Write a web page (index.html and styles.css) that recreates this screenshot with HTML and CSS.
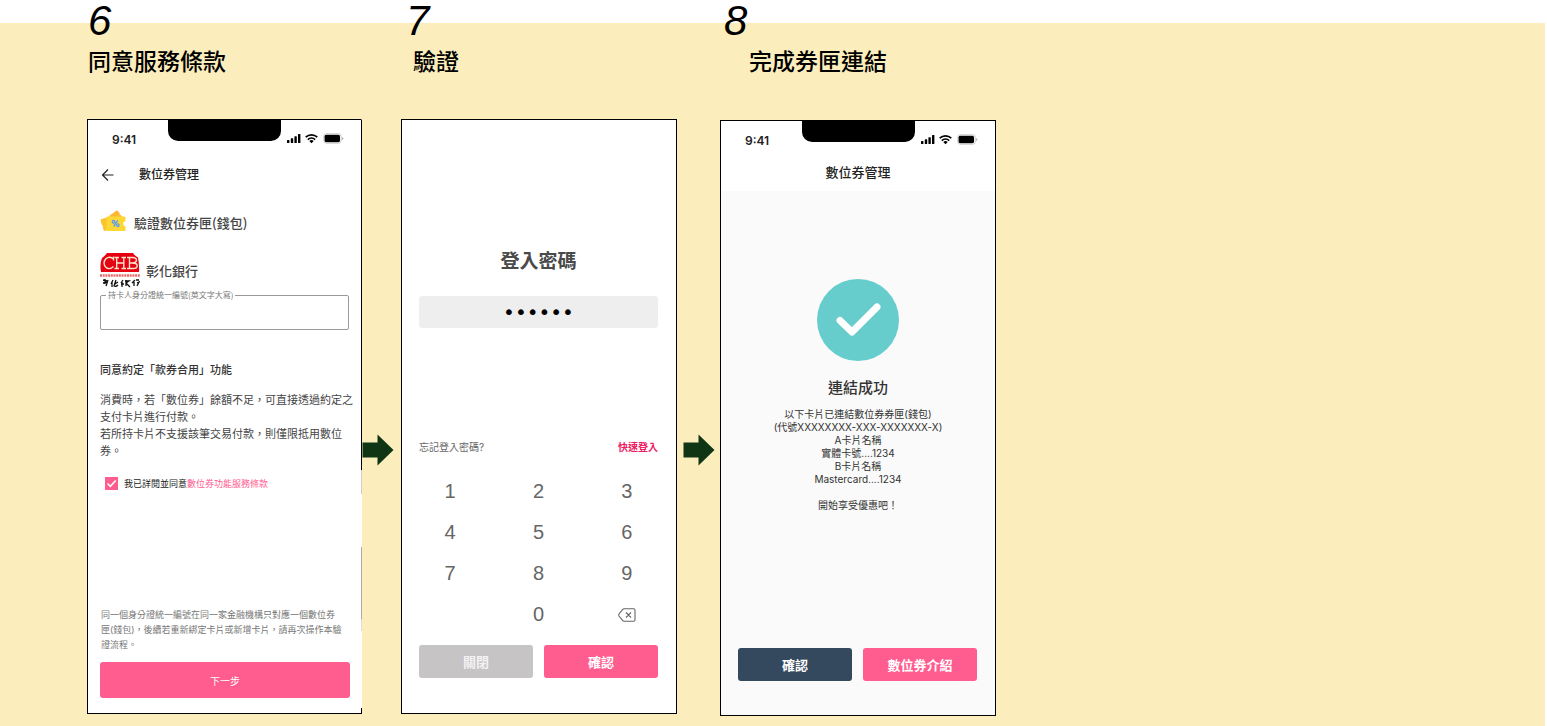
FILE: index.html
```html
<!DOCTYPE html>
<html lang="zh-Hant">
<head>
<meta charset="utf-8">
<meta name="viewport" content="width=device-width, initial-scale=1">
<title>數位券匣連結流程</title>
<link rel="stylesheet" href="styles.css">
</head>
<body>
<svg class="defs" aria-hidden="true">
  <symbol id="status" viewBox="0 0 58 12">
    <g fill="#000">
      <rect x="0" y="8" width="2.4" height="3" rx=".6"/>
      <rect x="3.8" y="6.3" width="2.4" height="4.7" rx=".6"/>
      <rect x="7.4" y="4.2" width="2.4" height="6.8" rx=".6"/>
      <rect x="11" y="2" width="2.4" height="9" rx=".6"/>
      <path d="M24.500 11.200 22.300 9a3.200 3.200 0 0 1 4.400 0z"/>
      <rect x="37.500" y="2.800" width="15.500" height="7.400" rx="1.600"/>
    </g>
    <g fill="none" stroke="#000" stroke-width="1.600">
      <path d="M18.700 5.200a8.500 8.500 0 0 1 11.600 0"/>
      <path d="M20.800 7.600a5.400 5.400 0 0 1 7.400 0"/>
    </g>
    <rect x="36.800" y="1.800" width="17.400" height="9.400" rx="2.600" fill="none" stroke="#bbb" stroke-width=".8"/>
    <path d="M55.200 5v3q1.200-.5 1.200-1.500T55.200 5z" fill="#aaa"/>
  </symbol>
  <symbol id="next" viewBox="0 0 32 32">
    <path d="M.500 8.500h15V.500L31.500 16l-16 15.500v-8h-15z" fill="#0f3515"/>
  </symbol>
</svg>

<main class="flow">
  <section class="step">
    <header class="step-head">
      <p class="step-number">6</p>
      <h2 class="step-title">同意服務條款</h2>
    </header>
    <form class="phone phone-terms">
      <div class="statusbar">
        <span class="clock">9:41</span><span class="notch"></span>
        <svg class="status-icons"><use href="#status"/></svg>
      </div>
      <div class="nav">
        <button class="icon-button" type="button" aria-label="返回">
          <svg class="back" viewBox="0 0 14 14" fill="none" stroke="#222" stroke-width="1.2"><path d="M13.500 7H2.500M8 1.500 2.500 7 8 12.500"/></svg>
        </button>
        <h3 class="nav-title">數位券管理</h3>
      </div>
      <div class="wallet">
        <svg class="coupon" viewBox="0 0 26 24">
          <path d="m9 6 8-5.700 2.500 2.500q-.5 2 1.500 2.500l2 3-8 6z" fill="#fdb62f"/>
          <path d="M.500 9.500 8 7v13l-4 1-1.200-3.500q.8-2-1.200-3z" fill="#fdc32f"/>
          <path d="M7.500 6.500h17q1 0 1 1V11q-2.300.5-2.300 2.800t2.300 2.700V20q0 1-1 1h-17q-1 0-1-1V7.500q0-1 1-1z" fill="#fdd835"/>
          <g fill="none" stroke="#5c9df0" stroke-width="1.300"><circle cx="13.500" cy="11.800" r="1.300"/><circle cx="17.800" cy="15.200" r="1.300"/><path d="m17.800 10.500-4.300 6"/></g>
        </svg>
        <span>驗證數位券匣(錢包)</span>
      </div>
      <div class="bank">
        <svg class="bank-logo" viewBox="0 0 40 35">
          <path d="M7 0h26q2 3 5 4.500 1.500 8 1 14.500H1Q-.5 11 2 5q3-2 5-5z" fill="#e50012"/>
          <g fill="none" stroke="#fbe3c8" stroke-width="1.400">
            <path d="M13.500 6Q10 2.500 5.800 5.800 2.500 10 5.500 14q4 3.500 8-.5M13.500 3.500v4"/>
            <path d="M14.500 4.500h4.500M14.500 15.500h4.500M21.500 4.500H26M21.500 15.500H26M16.700 4.500v11M23.800 4.500v11M16.700 10h7.100"/>
            <path d="M27 4.500h6q3.800.5 3.500 3-.5 2.500-4.500 2.500 5.200 0 5.200 2.700 0 2.800-4.200 2.800h-6M29.500 4.500v11M29.500 10H33"/>
          </g>
          <path d="M0 22.500h40" stroke="#ed6a6a" stroke-width="2.500" stroke-dasharray="2 .7"/>
          <g fill="none" stroke="#111" stroke-width="1.300">
            <path d="m3 27 4 1M5 26v5M3 30l4-1M8 27l-2 6"/>
            <path d="m13 27-2 4M12 29v5M16 27l-2 6q2 1 4-1M18 29l-3 2"/>
            <path d="m23 27-2 3M22 29v5M21 31h3M26 27v6M25 28h4l-3 2M26 30l4 4"/>
            <path d="m35 27-3 3M34 29v4M36 27h3M37 30l2-1-2 4"/>
          </g>
        </svg>
        <span>彰化銀行</span>
      </div>
      <fieldset class="field">
        <legend class="field-legend"><label for="holder-id">持卡人身分證統一編號(英文字大寫)</label></legend>
        <input class="field-input" id="holder-id" type="text">
      </fieldset>
      <h4 class="terms-title">同意約定「款券合用」功能</h4>
      <p class="terms-text">消費時，若「數位券」餘額不足，可直接透過約定之<br>支付卡片進行付款。<br>若所持卡片不支援該筆交易付款，則僅限抵用數位<br>券。</p>
      <div class="agree">
        <input class="agree-box" id="agree" type="checkbox" checked>
        <span><label for="agree">我已詳閱並同意</label><a class="agree-link" href="#">數位券功能服務條款</a></span>
      </div>
      <p class="note">同一個身分證統一編號在同一家金融機構只對應一個數位券<br>匣(錢包)，後續若重新綁定卡片或新增卡片，請再次操作本驗<br>證流程。</p>
      <button class="button button-wide" type="button">下一步</button>
    </form>
  </section>

  <svg class="arrow" aria-hidden="true"><use href="#next"/></svg>

  <section class="step">
    <header class="step-head step-head-verify">
      <p class="step-number">7</p>
      <h2 class="step-title">驗證</h2>
    </header>
    <form class="phone phone-login">
      <h3 class="login-title"><label for="password">登入密碼</label></h3>
      <input class="password" id="password" type="password" value="000000" autocomplete="off">
      <div class="links">
        <a class="forgot" href="#">忘記登入密碼?</a>
        <a class="quick" href="#">快速登入</a>
      </div>
      <div class="keypad">
        <button class="key" type="button">1</button>
        <button class="key" type="button">2</button>
        <button class="key" type="button">3</button>
        <button class="key" type="button">4</button>
        <button class="key" type="button">5</button>
        <button class="key" type="button">6</button>
        <button class="key" type="button">7</button>
        <button class="key" type="button">8</button>
        <button class="key" type="button">9</button>
        <button class="key key-zero" type="button">0</button>
        <button class="key" type="button" aria-label="刪除">
          <svg class="erase" viewBox="0 0 18 14" fill="none" stroke="#666" stroke-width="1.100"><path d="M6 .800h9.500q1.500 0 1.500 1.500v9.400q0 1.500-1.500 1.500H6Q5.300 13.200 4.800 12.600L1 8Q.500 7 1 6l3.800-4.600Q5.300.800 6 .800zM8 4.500l5 5M13 4.500l-5 5"/></svg>
        </button>
      </div>
      <div class="actions">
        <button class="button button-grey" type="button">關閉</button>
        <button class="button" type="button">確認</button>
      </div>
    </form>
  </section>

  <svg class="arrow arrow-center" aria-hidden="true"><use href="#next"/></svg>

  <section class="step">
    <header class="step-head step-head-done">
      <p class="step-number">8</p>
      <h2 class="step-title">完成券匣連結</h2>
    </header>
    <div class="phone phone-done">
      <div class="done-top">
        <div class="statusbar">
          <span class="clock">9:41</span><span class="notch"></span>
          <svg class="status-icons"><use href="#status"/></svg>
        </div>
        <h3 class="done-nav">數位券管理</h3>
      </div>
      <svg class="success" viewBox="0 0 82 82">
        <circle cx="41" cy="41" r="41" fill="#67cdcc"/>
        <path d="M23 41.500 35 53l25-25" fill="none" stroke="#fff" stroke-width="7" stroke-linecap="round" stroke-linejoin="round"/>
      </svg>
      <h4 class="done-title">連結成功</h4>
      <p class="done-text">以下卡片已連結數位券券匣(錢包)<br>(代號XXXXXXXX-XXX-XXXXXXX-X)<br>A卡片名稱<br>實體卡號....1234<br>B卡片名稱<br>Mastercard....1234<br><br>開始享受優惠吧！</p>
      <div class="actions actions-done">
        <button class="button button-navy" type="button">確認</button>
        <button class="button" type="button">數位券介紹</button>
      </div>
    </div>
  </section>
</main>
</body>
</html>
```
FILE: styles.css
```css
* {
  box-sizing: border-box;
}

body {
  margin: 0;
  background: #fff;
  color: #222;
  font-family: Inter, "Noto Sans CJK TC", sans-serif;
}

h2, h3, h4, p {
  margin: 0;
  font-weight: 500;
}

a {
  text-decoration: none;
}

button, input {
  font-family: inherit;
}

.defs {
  display: none;
}

.flow {
  display: grid;
  grid-template-columns: 275fr 39fr 276fr 43fr 276fr 549fr;
  align-items: start;
  min-height: 100vh;
  margin-right: 2px;
  padding: 0 0 10px 87px;
  background: linear-gradient(#fff 23px, #fceebc 23px);
}

/* Step headings */
.step-head {
  padding-left: 1px;
  margin-bottom: 41px;
}

.step-head-verify {
  padding-left: 5px;
}

.step-head-verify .step-title {
  padding-left: 7px;
}

.step-head-done {
  padding-left: 4px;
  margin-bottom: 42px;
}

.step-head-done .step-title {
  padding-left: 25px;
}

.step-number {
  color: #000;
  font: italic 400 42px/42px "Liberation Sans", sans-serif;
}

.step-title {
  padding-top: 4px;
  color: #000;
  font-size: 23px;
  line-height: 32px;
}

.arrow {
  width: 32px;
  height: 32px;
  margin-top: 434px;
}

.arrow-center {
  justify-self: center;
}

/* Phone frame */
.phone {
  display: flex;
  flex-direction: column;
  min-height: 595px;
  border: 1px solid #000;
  background: #fff;
}

.statusbar {
  display: grid;
  grid-template-columns: 1fr 113px 1fr;
  height: 40px;
}

.clock {
  padding-left: 24px;
  font-size: 12px;
  font-weight: 600;
  line-height: 40px;
}

.notch {
  height: 21px;
  border-radius: 0 0 10px 10px;
  background: #000;
}

.status-icons {
  width: 58px;
  height: 12px;
  margin: 12px 0 0 6px;
}

/* Buttons */
.button {
  height: 33px;
  padding: 0;
  border: 0;
  border-radius: 3px;
  background: #ff5c8f;
  color: #fff;
  font-size: 13px;
  font-weight: 700;
}

.button-wide {
  height: 36px;
  margin-top: 10px;
  font-size: 10px;
  font-weight: 400;
}

.button-grey {
  background: #c7c4c5;
  color: #f3f3f3;
}

.button-navy {
  background: #34495e;
}

.actions {
  display: grid;
  grid-template-columns: 1fr 1fr;
  gap: 11px;
}

/* Terms screen */
.phone-terms {
  padding: 0 11px 15px 12px;
  border-right-color: transparent;
  background:
    linear-gradient(#000 59%, #ccc 59% 63%, #fff 63% 72%, #aaa 72% 84%, #ddd 84% 86%, #fff 86% 99%, #000 99%) right / 1px 100% no-repeat border-box,
    #fff;
}

.phone-terms .statusbar {
  margin: 0 -11px 0 -12px;
}

.nav {
  display: flex;
  align-items: center;
  height: 30px;
}

.icon-button {
  display: flex;
  margin-right: 25px;
  padding: 0;
  border: 0;
  background: none;
}

.back {
  width: 14px;
  height: 14px;
}

.nav-title {
  font-size: 12px;
  line-height: 18px;
}

.wallet {
  display: flex;
  align-items: center;
  gap: 8px;
  height: 28px;
  margin-top: 18px;
  color: #444;
  font-family: "Noto Sans CJK TC", sans-serif;
  font-size: 13px;
  font-weight: 500;
}

.coupon {
  width: 26px;
  height: 24px;
}

.bank {
  display: flex;
  align-items: center;
  gap: 6px;
  margin-top: 17px;
  color: #444;
  font-size: 13px;
  font-weight: 500;
}

.bank-logo {
  width: 40px;
  height: 35px;
}

.field {
  height: 40px;
  margin: 2px 1px 0 0;
  padding: 0 5px;
  border: 1px solid #999;
  border-radius: 2px;
}

.field-legend {
  padding: 0 2px;
  color: #777;
  font-family: "Noto Sans CJK TC", sans-serif;
  font-size: 8px;
  line-height: 10px;
}

.field-input {
  width: 100%;
  height: 26px;
  padding: 0;
  border: 0;
  outline: 0;
  background: none;
}

.terms-title {
  margin-top: 31px;
  color: #333;
  font-size: 11px;
  line-height: 18px;
}

.terms-text {
  margin: 13px -8px 0 0;
  color: #444;
  font-size: 11px;
  font-weight: 400;
  line-height: 17px;
}

.agree {
  display: flex;
  align-items: center;
  gap: 6px;
  height: 14px;
  margin-top: 16px;
  padding-left: 5px;
  font-size: 9px;
}

.agree-box {
  width: 13px;
  height: 13px;
  margin: 0;
  appearance: none;
  background: #ff5c8f url("data:image/svg+xml,%3Csvg xmlns='http://www.w3.org/2000/svg' viewBox='0 0 13 13'%3E%3Cpath d='M2.500 6.500 5.300 9.300 10.700 3.500' fill='none' stroke='white' stroke-width='1.500'/%3E%3C/svg%3E");
}

.agree-link {
  color: #ff5c8f;
}

.note {
  margin: auto -8px 0 1px;
  color: #777;
  font-size: 9px;
  font-weight: 400;
  line-height: 15px;
}

/* Login screen */
.phone-login {
  padding: 127px 18px 35px 17px;
}

.login-title {
  color: #4a4a4a;
  font-size: 19px;
  font-weight: 700;
  line-height: 30px;
  text-align: center;
}

.password {
  width: 100%;
  height: 32px;
  margin-top: 19px;
  padding: 0;
  border: 0;
  border-radius: 3px;
  background: #eee;
  color: #000;
  font-family: "DejaVu Sans", sans-serif;
  font-size: 20px;
  text-align: center;
}

.links {
  display: flex;
  justify-content: space-between;
  margin-top: 111px;
  font-size: 10px;
  line-height: 16px;
}

.forgot {
  color: #666;
}

.quick {
  color: #ee1c63;
  font-weight: 700;
}

.keypad {
  display: grid;
  grid-template-columns: repeat(3, 1fr);
  column-gap: 26px;
  margin-top: 16px;
}

.key {
  display: flex;
  align-items: center;
  justify-content: center;
  height: 41px;
  padding: 0;
  border: 0;
  background: none;
  color: #666;
  font-family: "Liberation Sans", sans-serif;
  font-size: 20px;
}

.key-zero {
  grid-column: 2;
}

.erase {
  width: 18px;
  height: 14px;
}

.phone-login .actions {
  margin-top: auto;
}

/* Completion screen */
.phone-done {
  min-height: 596px;
  background: #fafafa;
  text-align: center;
}

.done-top {
  height: 70px;
  background: #fff;
  text-align: left;
}

.done-nav {
  font-size: 13px;
  line-height: 22px;
  text-align: center;
}

.success {
  align-self: center;
  width: 82px;
  height: 82px;
  margin-top: 88px;
}

.done-title {
  margin-top: 16px;
  color: #333;
  font-size: 15px;
  line-height: 22px;
}

.done-text {
  margin-top: 9px;
  color: #333;
  font-size: 10px;
  font-weight: 400;
  line-height: 13px;
}

.actions-done {
  margin: auto 18px 34px 17px;
}
```
